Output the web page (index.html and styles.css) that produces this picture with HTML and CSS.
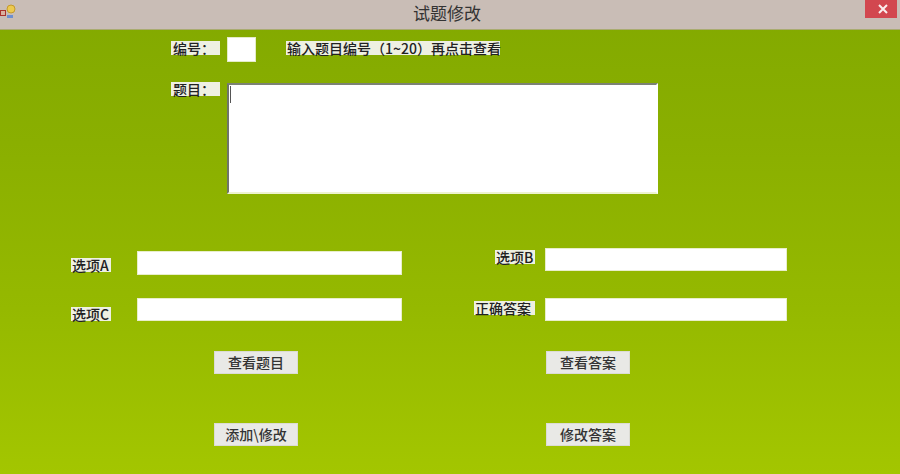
FILE: index.html
```html
<!DOCTYPE html>
<html lang="zh-CN">
<head>
    <meta charset="UTF-8">
    <title>试题修改</title>
    <link rel="stylesheet" href="styles.css">
</head>
<body>
    <div class="window">
        <div class="titlebar">
            <svg class="app-icon" width="17" height="16" viewBox="0 0 17 16">
                <rect x="0.5" y="7.5" width="5" height="5" fill="#d9b0a0" stroke="#a8322c"/>
                <circle cx="11" cy="6" r="4" fill="#ecc94f" stroke="#c49a2c"/>
                <rect x="7" y="12" width="6" height="3" fill="#6d8fd0"/>
            </svg>
            <span class="title">试题修改</span>
            <div class="close-btn">
                <svg width="10" height="10" viewBox="0 0 10 10">
                    <path d="M1 1L9 9M9 1L1 9" stroke="#fbeeee" stroke-width="2"/>
                </svg>
            </div>
        </div>

        <div class="form">
            <div class="top-row">
                <span class="label label-top">编号：</span>
                <input type="text" class="id-input">
                <span class="label hint">输入题目编号（1~20）再点击查看</span>
            </div>

            <div class="question-row">
                <span class="label label-top">题目：</span>
                <div class="question-box">
                    <textarea class="question-input"></textarea>
                    <span class="caret"></span>
                </div>
            </div>

            <div class="columns">
                <div class="col col-left">
                    <div class="row row-a">
                        <span class="label label-opt label-a">选项A</span>
                        <input type="text" class="opt-input">
                    </div>
                    <div class="row row-c">
                        <span class="label label-opt label-c">选项C</span>
                        <input type="text" class="opt-input">
                    </div>
                    <button class="button first-btn">查看题目</button>
                    <button class="button second-btn">添加\修改</button>
                </div>

                <div class="col col-right">
                    <div class="row row-b">
                        <span class="label label-opt label-b">选项B</span>
                        <input type="text" class="opt-input">
                    </div>
                    <div class="row row-answer">
                        <span class="label label-answer">正确答案</span>
                        <input type="text" class="opt-input">
                    </div>
                    <button class="button first-btn">查看答案</button>
                    <button class="button second-btn">修改答案</button>
                </div>
            </div>
        </div>
    </div>
</body>
</html>
```

FILE: styles.css
```css
html, body {
    margin: 0;
    padding: 0;
}

body {
    width: 900px;
    height: 474px;
    overflow: hidden;
    font-family: "Noto Sans CJK SC", "Liberation Sans", sans-serif;
    color: #222;
}

.window {
    height: 474px;
    display: flex;
    flex-direction: column;
    background: linear-gradient(to bottom, #82a900 0%, #8aaf00 30%, #95b900 65%, #a3c600 100%);
}

.titlebar {
    height: 29px;
    flex: none;
    display: flex;
    justify-content: center;
    background-color: #c9bdb6;
    border-bottom: 1px solid #a9ab70;
    position: relative;
}

.app-icon {
    position: absolute;
    left: 0;
    top: 3px;
}

.title {
    font-size: 17px;
    line-height: 26px;
    margin-left: -6px;
    color: #333;
}

.close-btn {
    position: absolute;
    right: 3px;
    top: 0;
    width: 32px;
    height: 18px;
    background-color: #d2474f;
    display: flex;
    align-items: center;
    justify-content: center;
    box-sizing: border-box;
    padding-left: 3px;
}

.form {
    flex: 1;
    padding-top: 7px;
}

.label {
    display: block;
    flex: none;
    height: 14px;
    font-size: 14px;
    font-weight: 500;
    line-height: 14px;
    white-space: nowrap;
    background-color: #eef0e2;
}

input, textarea {
    display: block;
    margin: 0;
    padding: 0;
    box-sizing: border-box;
    background-color: #fff;
    outline: none;
    flex: none;
}

.top-row {
    display: flex;
    height: 25px;
    margin-left: 171px;
}

.label-top {
    width: 47px;
    padding-left: 2px;
    margin-top: 4px;
}

.id-input {
    width: 29px;
    height: 25px;
    margin-left: 7px;
    border: 1px solid #e4ecc8;
}

.hint {
    width: 213px;
    padding-left: 1px;
    margin-left: 30px;
    margin-top: 4px;
}

.question-row {
    display: flex;
    margin-top: 21px;
    margin-left: 171px;
}

.question-row .label-top {
    margin-top: -1px;
}

.question-box {
    position: relative;
    margin-left: 7px;
}

.question-input {
    width: 431px;
    height: 111px;
    resize: none;
    border: 2px solid #fff;
    border-top-color: #7c8274;
    border-left-color: #6f7568;
    border-bottom-color: #eef3d0;
}

.caret {
    position: absolute;
    left: 3px;
    top: 3px;
    width: 1px;
    height: 17px;
    background-color: #555;
}

.columns {
    display: flex;
    margin-top: 54px;
    margin-left: 71px;
}

.col {
    display: flex;
    flex-direction: column;
    align-items: flex-start;
}

.col-left {
    width: 403px;
    padding-top: 3px;
}

.row {
    display: flex;
}

.row-c {
    margin-top: 23px;
}

.row-answer {
    margin-top: 27px;
}

.col-left .opt-input {
    width: 265px;
    margin-left: 26px;
}

.col-left .row-a .opt-input {
    height: 24px;
}

.col-right .opt-input {
    width: 242px;
    margin-left: 10px;
}

.opt-input {
    height: 23px;
    border: 1px solid #e8eecb;
}

.label-opt {
    width: 39px;
    padding-left: 1px;
}

.label-a {
    margin-top: 7px;
}

.label-c {
    margin-top: 9px;
}

.label-b {
    margin-top: 2px;
    margin-left: 21px;
}

.label-answer {
    width: 60px;
    padding-left: 1px;
    margin-top: 3px;
}

.button {
    width: 84px;
    height: 23px;
    padding: 0;
    font-family: inherit;
    font-size: 14px;
    font-weight: 500;
    line-height: 21px;
    color: #333;
    background-color: #e9e9e6;
    border: 1px solid #dcdcd4;
}

.first-btn {
    margin-top: 30px;
}

.second-btn {
    margin-top: 49px;
}

.col-left .button {
    margin-left: 143px;
}

.col-right .button {
    margin-left: 72px;
}
```
